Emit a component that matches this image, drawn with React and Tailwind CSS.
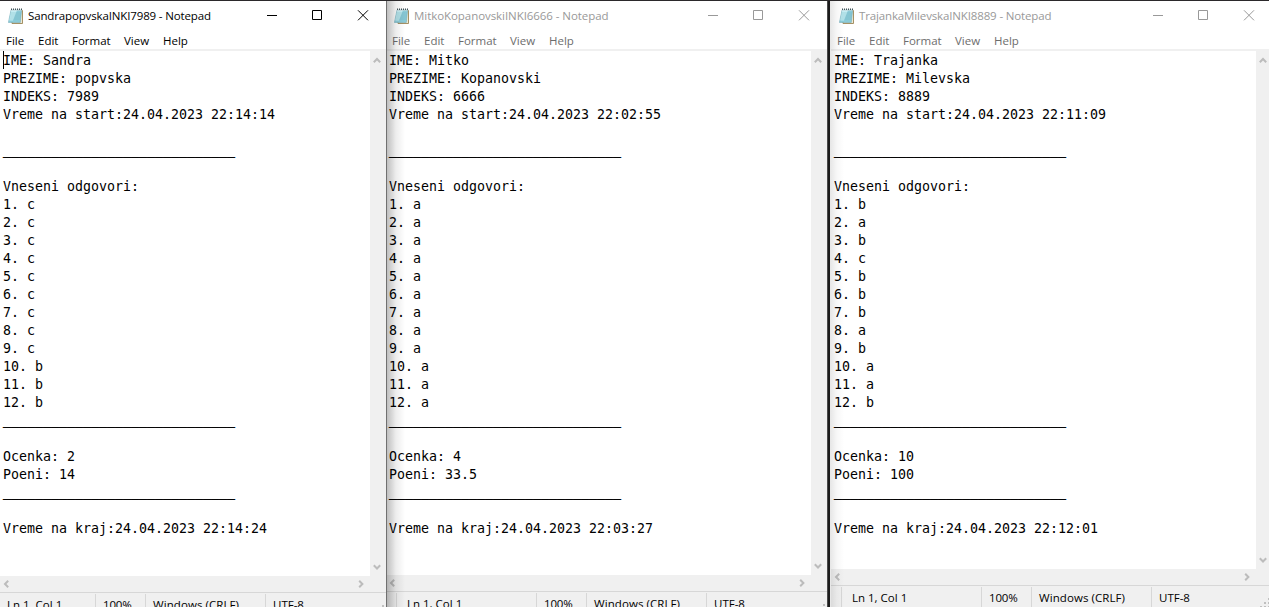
import React from "react";

const RULE = "_".repeat(29);

const windows = [
  {
    title: "SandrapopvskaINKI7989 - Notepad",
    active: true,
    frame: "w-[386px]",
    inner: "w-[386px]",
    titleText: "tracking-[-0.14px] text-black",
    body: "h-[525px]",
    cells: ["w-[95px] pl-[7px]"],
    name: "Sandra",
    surname: "popvska",
    index: "7989",
    start: "24.04.2023 22:14:14",
    end: "24.04.2023 22:14:24",
    answers: "cccccccccbbb",
    grade: "2",
    points: "14",
  },
  {
    title: "MitkoKopanovskiINKI6666 - Notepad",
    active: false,
    frame: "w-[440px]",
    inner: "w-[441px] -ml-px",
    titleText: "tracking-[-0.06px] text-[#999]",
    body: "h-[524px]",
    shadow: "w-[18px] from-black/25 via-black/7",
    cells: ["w-[10px]", "w-[140px] pl-[10px] border-l"],
    name: "Mitko",
    surname: "Kopanovski",
    index: "6666",
    start: "24.04.2023 22:02:55",
    end: "24.04.2023 22:03:27",
    answers: "aaaaaaaaaaaa",
    grade: "4",
    points: "33.5",
  },
  {
    title: "TrajankaMilevskaINKI8889 - Notepad",
    active: false,
    frame: "w-[439px]",
    inner: "w-[441px] ml-px",
    titleText: "tracking-[-0.14px] text-[#999]",
    body: "h-[518px]",
    shadow: "w-[14px] from-black/10 via-black/3",
    cells: ["w-[10px]", "w-[140px] pl-[10px] border-l"],
    name: "Trajanka",
    surname: "Milevska",
    index: "8889",
    start: "24.04.2023 22:11:09",
    end: "24.04.2023 22:12:01",
    answers: "babcbbbabaab",
    grade: "10",
    points: "100",
  },
];

function NotepadIcon() {
  return (
    <svg width="16" height="16" viewBox="0 0 16 16" className="shrink-0">
      <path d="M3.5 2.5H14.5V15.5H4Z" fill="#eee9d5" stroke="#9c8656" strokeWidth="0.9" />
      <path d="M3 2H13.7L12.3 14.5H0.4Z" fill="#8bcbd8" stroke="#6ba4b3" strokeWidth="0.5" />
      <path d="M3.3 2.2H9L5 12.5H1.2Z" fill="#c4edf3" />
      <path d="M2.8 5H13M2.5 7H12.7M2.2 9H12.5M1.8 11H12.2" stroke="#70b3c2" strokeWidth="0.45" />
      <path d="M3 1.2H14" stroke="#3b4b51" strokeWidth="1.6" strokeDasharray="1 1" />
      <path d="M3 2.4H13.8" stroke="#cfd9da" strokeWidth="0.6" />
    </svg>
  );
}

function Controls({ active }) {
  return (
    <svg
      width="102"
      height="11"
      viewBox="0 0 102 11"
      fill="none"
      stroke={active ? "#000" : "#999"}
      className="ml-auto mr-[17px] shrink-0"
    >
      <path d="M0 5.5H10" />
      <path d="M45.5 0.5H54.5V9.5H45.5Z" />
      <path d="M91 0.3L101 10.3M101 0.3L91 10.3" />
    </svg>
  );
}

const chevrons = {
  up: "M0.8 5.2L4 2L7.2 5.2",
  down: "M0.8 1.3L4 4.5L7.2 1.3",
  left: "M5.2 0.8L2 4L5.2 7.2",
  right: "M1.2 0.8L4.4 4L1.2 7.2",
};

function Chevron({ dir }) {
  const vertical = dir === "up" || dir === "down";
  return (
    <svg width={vertical ? 8 : 6} height={vertical ? 6 : 8} fill="none" stroke="#bcbcbc" strokeWidth="2" className="shrink-0">
      <path d={chevrons[dir]} />
    </svg>
  );
}

function Line({ children }) {
  return <div className="h-[18px]">{children}</div>;
}

function Rule() {
  return <div className="-mt-px mb-px h-[18px] [text-shadow:0_0_0_#000,0_0_0_#000,0_0_0_#000]">{RULE}</div>;
}

function Notepad({ doc }) {
  return (
    <div className={`${doc.frame} relative h-full shrink-0 overflow-hidden bg-white`}>
      <div className={`${doc.inner} flex h-full flex-col`}>
        <div className="flex h-[29px] shrink-0 items-center pl-2">
          <NotepadIcon />
          <span className={`ml-1 whitespace-nowrap text-[11.5px] leading-[16px] ${doc.titleText}`}>{doc.title}</span>
          <Controls active={doc.active} />
        </div>
        <div className={`flex h-[19px] shrink-0 items-center pl-[6px] pt-[2px] text-[11.5px] leading-[16px] ${doc.active ? "text-black" : "text-[#6d6d6d]"}`}>
          <span className="w-8">File</span>
          <span className="w-[34px]">Edit</span>
          <span className="w-[52px]">Format</span>
          <span className="w-[39px]">View</span>
          <span>Help</span>
        </div>
        <div className="h-[2px] shrink-0 bg-[#f0f0f0]" />
        <div className={`${doc.body} flex shrink-0 bg-[#f0f0f0]`}>
          <div className="relative min-w-0 flex-1 whitespace-pre bg-white pl-[3px] pt-px font-['DejaVu_Sans_Mono',monospace] text-[13.29px] leading-[18px] text-black">
            {doc.active && <div className="absolute left-[3px] top-0 h-[18px] w-px bg-black" />}
            <Line>IME: {doc.name}</Line>
            <Line>PREZIME: {doc.surname}</Line>
            <Line>INDEKS: {doc.index}</Line>
            <Line>Vreme na start:{doc.start}</Line>
            <Line />
            <Rule />
            <Line />
            <Line>Vneseni odgovori:</Line>
            {doc.answers.split("").map((a, i) => (
              <Line key={i}>{`${i + 1}. ${a}`}</Line>
            ))}
            <Rule />
            <Line />
            <Line>Ocenka: {doc.grade}</Line>
            <Line>Poeni: {doc.points}</Line>
            <Rule />
            <Line />
            <Line>Vreme na kraj:{doc.end}</Line>
          </div>
          <div className="flex w-4 shrink-0 flex-col justify-between pb-[6px] pl-[3px] pt-[6px]">
            <Chevron dir="up" />
            <Chevron dir="down" />
          </div>
        </div>
        <div className="flex h-4 shrink-0 items-center justify-between bg-[#f0f0f0] pb-px pl-[3px] pr-[22px]">
          <Chevron dir="left" />
          <Chevron dir="right" />
        </div>
        <div className="relative flex flex-1 overflow-hidden border-t border-[#d7d7d7] bg-[#f0f0f0] pt-px text-[11.5px] leading-[16px] text-black">
          {doc.cells.map((c, i) => (
            <div key={i} className={`${c} shrink-0 whitespace-nowrap border-[#d7d7d7] pt-[3px]`}>
              {i === doc.cells.length - 1 ? "Ln 1, Col 1" : ""}
            </div>
          ))}
          <div className="w-[50px] shrink-0 border-l border-[#d7d7d7] pl-[7px] pt-[3px] tracking-[-0.2px]">100%</div>
          <div className="w-[120px] shrink-0 whitespace-nowrap border-l border-[#d7d7d7] pl-[7px] pt-[3px] tracking-[0.08px]">Windows (CRLF)</div>
          <div className="flex-1 border-l border-[#d7d7d7] pl-[7px] pt-[3px]">UTF-8</div>
          <svg width="12" height="12" fill="#bfbfbf" className="absolute right-0 top-[12px]">
            <path d="M8 0h2v2h-2zM4 4h2v2h-2zM8 4h2v2h-2zM0 8h2v2h-2zM4 8h2v2h-2zM8 8h2v2h-2z" />
          </svg>
        </div>
      </div>
      {doc.shadow && (
        <div className={`pointer-events-none absolute inset-y-0 left-0 bg-gradient-to-r to-transparent ${doc.shadow}`} />
      )}
    </div>
  );
}

export default function App() {
  return (
    <div className="flex h-[607px] w-[1269px] overflow-hidden border-t border-[#2b292b] bg-white font-['Open_Sans','Noto_Sans',sans-serif]">
      <Notepad doc={windows[0]} />
      <div className="w-px shrink-0 bg-[#707070]" />
      <Notepad doc={windows[1]} />
      <div className="w-[3px] shrink-0 border-l border-[#4a4a4a] bg-[#1c1c1c]" />
      <Notepad doc={windows[2]} />
    </div>
  );
}
